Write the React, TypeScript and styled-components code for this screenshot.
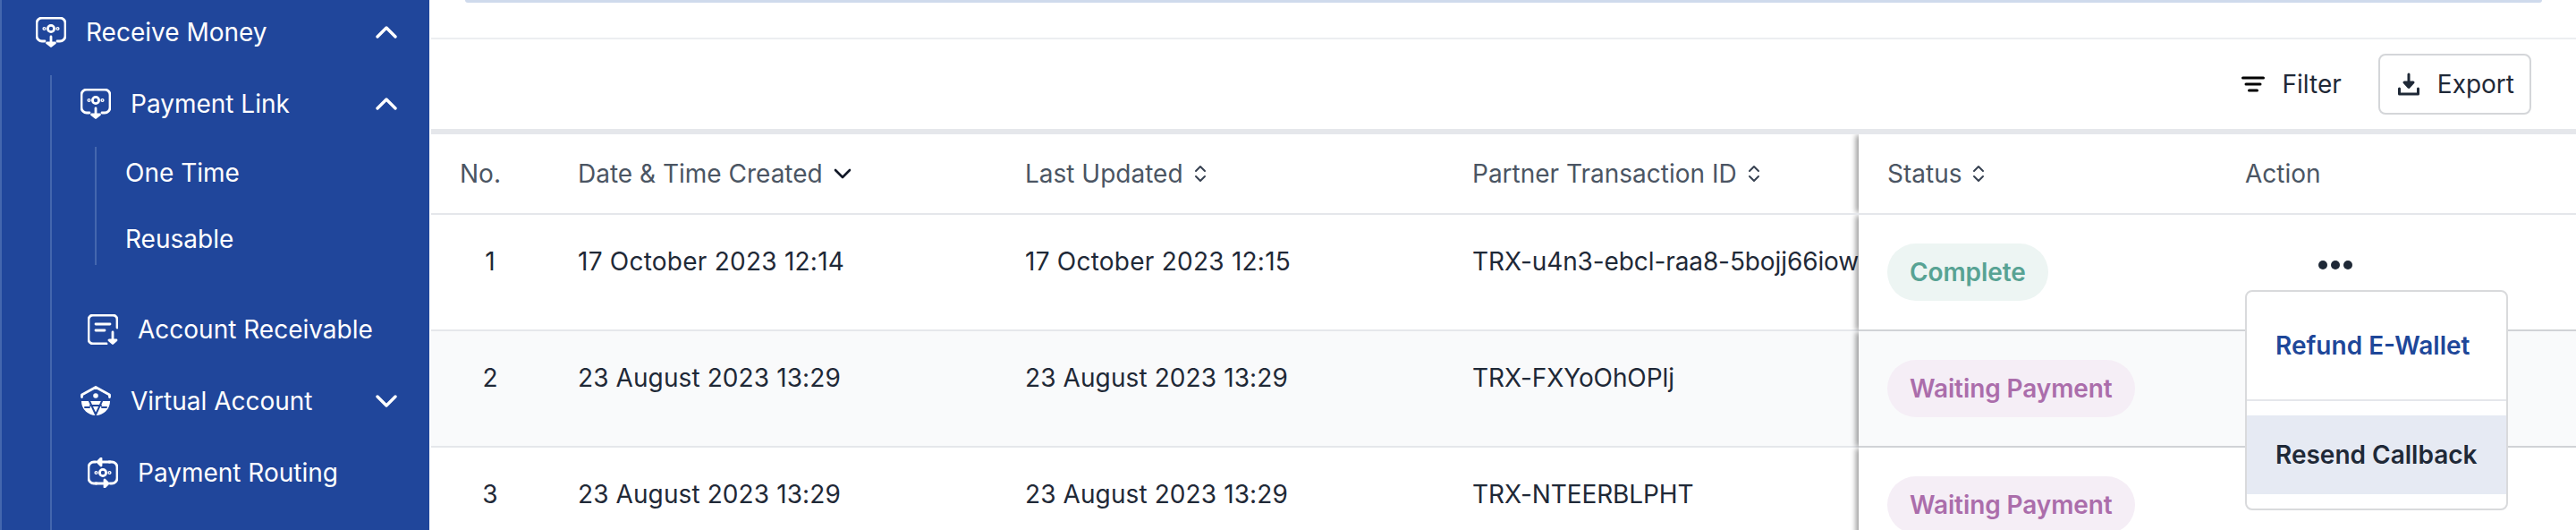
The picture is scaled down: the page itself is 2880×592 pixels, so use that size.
import styled, { createGlobalStyle } from 'styled-components';

const GlobalStyle = createGlobalStyle`
    html, body {
        margin: 0;
        padding: 0;
        background: #ffffff;
        overflow: hidden;
    }
    body {
        font-family: Inter, "Liberation Sans", sans-serif;
        font-size: 28px;
    }
`;

const Page = styled.div`
    display: flex;
    width: 2880px;
    height: 592px;
    overflow: hidden;
`;

const Sidebar = styled.nav`
    width: 480px;
    flex: none;
    box-sizing: border-box;
    padding-left: 38px;
    background: #20469b;
    border-left: 2px solid #4467ae;
    color: #ffffff;
    overflow: hidden;
`;

const MenuItem = styled.div<{ $height: number; $inset?: number }>`
    display: flex;
    align-items: center;
    gap: 22px;
    height: ${(p) => p.$height}px;
    padding-left: ${(p) => p.$inset ?? 0}px;
    font-size: 28px;
    line-height: 40px;
`;

const RootItem = styled(MenuItem)`
    margin-top: -4px;
`;

const MenuLabel = styled.span`
    flex: 1;
`;

const Caret = styled.svg`
    width: 24px;
    height: 14px;
    flex: none;
    margin-right: 36px;
    fill: none;
    stroke: #ffffff;
    stroke-width: 3.4;
    stroke-linecap: round;
    stroke-linejoin: round;
`;

const SubMenu = styled.div`
    display: flex;
    flex-direction: column;
    gap: 16px;
    margin: 8px 0 0 16px;
    padding-left: 32px;
    min-height: 520px;
    border-left: 2px solid #4467ae;
`;

const LinkMenu = styled.div`
    display: flex;
    flex-direction: column;
    gap: 16px;
    margin: 0 0 24px 16px;
    padding-left: 32px;
    border-left: 2px solid #4467ae;
`;

const SubLink = styled.div`
    display: flex;
    align-items: center;
    height: 58px;
    font-size: 28px;
`;

const NavIcon = styled.svg`
    width: 34px;
    height: 34px;
    flex: none;
    fill: none;
    stroke: #ffffff;
    stroke-width: 2.8;
    stroke-linecap: round;
    stroke-linejoin: round;
`;

const Main = styled.main`
    flex: 1;
    min-width: 0;
    padding-left: 2px;
`;

const TopBand = styled.div`
    height: 42px;
    border-bottom: 2px solid #eceef1;
`;

const TopCardEdge = styled.div`
    height: 3px;
    margin: 0 38px;
    border-radius: 0 0 8px 8px;
    background: #cfdaec;
`;

const Toolbar = styled.div`
    display: flex;
    align-items: center;
    justify-content: flex-end;
    gap: 41px;
    height: 100px;
    padding-right: 50px;
    border-bottom: 6px solid #e5e7eb;
    color: #1f2937;
`;

const FilterButton = styled.div`
    display: flex;
    align-items: center;
    gap: 20px;
`;

const ExportButton = styled.div`
    display: flex;
    align-items: center;
    gap: 20px;
    box-sizing: border-box;
    height: 68px;
    padding: 0 17px 0 20px;
    border: 2px solid #d4d6d9;
    border-radius: 8px;
`;

const FilterGlyph = styled.svg`
    width: 26px;
    height: 26px;
    flex: none;
`;

const ExportGlyph = styled.svg`
    width: 24px;
    height: 26px;
    flex: none;
`;

const Row = styled.div<{ $striped?: boolean }>`
    display: grid;
    grid-template-columns: 132px 500px 500px 464px 401px 401px;
    background: ${(p) => (p.$striped ? '#f9fafb' : '#ffffff')};
    border-bottom: 2px solid #e5e7eb;
`;

const HeadCell = styled.div`
    display: flex;
    align-items: center;
    gap: 12px;
    height: 88px;
    padding-left: 32px;
    color: #4b5563;
    white-space: nowrap;
`;

const StatusHeadCell = styled(HeadCell)`
    position: relative;
    box-shadow: -4px 0 6px -1px rgba(0, 0, 0, 0.4);
    clip-path: inset(0 0 0 -12px);
    background: #ffffff;
`;

const ActionHeadCell = styled(HeadCell)`
    padding-left: 31px;
`;

const Cell = styled.div<{ $tracking?: number }>`
    height: 128px;
    box-sizing: border-box;
    padding: 32px 0 0 32px;
    line-height: 40px;
    color: #1f2937;
    white-space: nowrap;
    letter-spacing: ${(p) => p.$tracking ?? 0}px;
`;

const NumberCell = styled(Cell)`
    padding-left: 0;
    text-align: center;
`;

const StatusCell = styled(Cell)`
    position: relative;
    height: 130px;
    margin-bottom: -2px;
    background: inherit;
    border-bottom: 2px solid #d1d3d6;
    box-shadow: -4px 0 6px -1px rgba(0, 0, 0, 0.4);
    clip-path: inset(0 0 0 -12px);
`;

const ActionCell = styled.div`
    position: relative;
    height: 130px;
    margin-bottom: -2px;
    box-sizing: border-box;
    border-bottom: 2px solid #d1d3d6;
`;

const Badge = styled.span<{ $tone: 'complete' | 'waiting' }>`
    display: inline-flex;
    align-items: center;
    height: 64px;
    padding: 0 25px;
    border-radius: 32px;
    font-size: 28px;
    font-weight: 600;
    letter-spacing: -0.1px;
    background: ${(p) => (p.$tone === 'complete' ? '#edf5f3' : '#f5eef6')};
    color: ${(p) => (p.$tone === 'complete' ? '#58a394' : '#ab6dab')};
`;

const Dots = styled.svg`
    display: block;
    width: 40px;
    height: 12px;
    margin: 50px 0 0 112px;
    fill: #1f2937;
`;

const Dropdown = styled.div`
    position: absolute;
    z-index: 2;
    top: 84px;
    left: 31px;
    box-sizing: border-box;
    width: 294px;
    height: 246px;
    background: #ffffff;
    border: 2px solid #d9dadc;
    border-radius: 8px;
    font-weight: 600;
`;

const RefundOption = styled.div`
    display: flex;
    align-items: center;
    height: 120px;
    padding-left: 32px;
    border-bottom: 2px solid #e5e7eb;
    color: #1e4799;
`;

const CallbackOption = styled.div`
    display: flex;
    align-items: center;
    height: 88px;
    margin-top: 16px;
    padding-left: 32px;
    background: #e6eaf3;
    color: #1f2937;
`;

function ReceiveIcon() {
    return (
        <NavIcon viewBox="0 0 34 34">
            <path d="M10 27H7a6 6 0 0 1-6-6V7a6 6 0 0 1 6-6h20a6 6 0 0 1 6 6v14a6 6 0 0 1-6 6h-3" />
            <circle cx="17" cy="13" r="3.6" />
            <circle cx="9.500" cy="13" r="0.7" />
            <circle cx="24.500" cy="13" r="0.7" />
            <path d="M17 22v8" />
            <path d="M12.500 29h9L17 32.500z" fill="#ffffff" />
        </NavIcon>
    );
}

function ReceivableIcon() {
    return (
        <NavIcon viewBox="0 0 34 34">
            <path d="M21 33H6a5 5 0 0 1-5-5V6a5 5 0 0 1 5-5h22a5 5 0 0 1 5 5v9" />
            <path d="M9 11h16M9 18h10" />
            <path d="M28 20v11" />
            <path d="M24 29h8l-4 3.500z" fill="#ffffff" />
        </NavIcon>
    );
}

function VirtualAccountIcon() {
    return (
        <NavIcon viewBox="0 0 34 34">
            <path d="M1.500 12.500V10L17 1.500 32.500 10v2.500" />
            <circle cx="17" cy="11" r="1.400" fill="#ffffff" />
            <path d="M1 17h32a16 16 0 0 1-32 0z" fill="#ffffff" stroke="none" />
            <path d="M10 17l7 15 7-15M5 24h5M24 24h5M11 22h12" stroke="#20469b" strokeWidth="2" />
        </NavIcon>
    );
}

function RoutingIcon() {
    return (
        <NavIcon viewBox="0 0 34 34">
            <path d="M9 5H7a6 6 0 0 0-6 6v12a6 6 0 0 0 6 6h3" />
            <path d="M25 29h2a6 6 0 0 0 6-6V11a6 6 0 0 0-6-6h-3" />
            <path d="M25 5H14" />
            <path d="M15 1v8l-4-4z" fill="#ffffff" />
            <path d="M9 29h11" />
            <path d="M19 25v8l4-4z" fill="#ffffff" />
            <circle cx="17" cy="17" r="3.600" />
            <circle cx="9.500" cy="17" r="0.7" />
            <circle cx="24.500" cy="17" r="0.7" />
        </NavIcon>
    );
}

function CaretUp() {
    return (
        <Caret viewBox="0 0 24 14">
            <path d="M2 12l10-10 10 10" />
        </Caret>
    );
}

function CaretDown() {
    return (
        <Caret viewBox="0 0 24 14">
            <path d="M2 2l10 10 10-10" />
        </Caret>
    );
}

function SortIcon() {
    return (
        <svg width="14" height="20" viewBox="0 0 14 20" fill="none" stroke="#374151" strokeWidth="2" strokeLinecap="round" strokeLinejoin="round">
            <path d="M2 7l5-5 5 5M2 13l5 5 5-5" />
        </svg>
    );
}

function SortedIcon() {
    return (
        <svg width="20" height="12" viewBox="0 0 20 12" fill="none" stroke="#111827" strokeWidth="2.6" strokeLinecap="round" strokeLinejoin="round">
            <path d="M2 2l8 8 8-8" />
        </svg>
    );
}

// the 1s in the reference dates run wider, so the first row needs more tracking
const rows = [
    { id: '1', created: '17 October 2023 12:14', updated: '17 October 2023 12:15', tracking: 0.24, partner: 'TRX-u4n3-ebcl-raa8-5bojj66iow', tone: 'complete' as const, status: 'Complete' },
    { id: '2', created: '23 August 2023 13:29', updated: '23 August 2023 13:29', tracking: 0.1, partner: 'TRX-FXYoOhOPlj', tone: 'waiting' as const, status: 'Waiting Payment' },
    { id: '3', created: '23 August 2023 13:29', updated: '23 August 2023 13:29', tracking: 0.1, partner: 'TRX-NTEERBLPHT', tone: 'waiting' as const, status: 'Waiting Payment' },
];

export default function App() {
    return (
        <Page>
            <GlobalStyle />
            <Sidebar>
                <RootItem $height={80}>
                    <ReceiveIcon />
                    <MenuLabel>Receive Money</MenuLabel>
                    <CaretUp />
                </RootItem>
                <SubMenu>
                    <MenuItem $height={64}>
                        <ReceiveIcon />
                        <MenuLabel>Payment Link</MenuLabel>
                        <CaretUp />
                    </MenuItem>
                    <LinkMenu>
                        <SubLink>One Time</SubLink>
                        <SubLink>Reusable</SubLink>
                    </LinkMenu>
                    <MenuItem $height={64} $inset={8}>
                        <ReceivableIcon />
                        <MenuLabel>Account Receivable</MenuLabel>
                    </MenuItem>
                    <MenuItem $height={64}>
                        <VirtualAccountIcon />
                        <MenuLabel>Virtual Account</MenuLabel>
                        <CaretDown />
                    </MenuItem>
                    <MenuItem $height={64} $inset={8}>
                        <RoutingIcon />
                        <MenuLabel>Payment Routing</MenuLabel>
                    </MenuItem>
                </SubMenu>
            </Sidebar>
            <Main>
                <TopBand>
                    <TopCardEdge />
                </TopBand>
                <Toolbar>
                    <FilterButton>
                        <FilterGlyph viewBox="0 0 26 26" fill="none" stroke="#000000" strokeWidth="3" strokeLinecap="round">
                            <path d="M1.500 6h23M5 13h16M8.500 20h9" />
                        </FilterGlyph>
                        Filter
                    </FilterButton>
                    <ExportButton>
                        <ExportGlyph viewBox="0 0 24 26" fill="none" stroke="#1f2937" strokeWidth="3" strokeLinecap="round" strokeLinejoin="round">
                            <path d="M12 2v13" />
                            <path d="M7 11h10l-5 5.500z" fill="#1f2937" />
                            <path d="M1.500 18v6h21v-6" />
                        </ExportGlyph>
                        Export
                    </ExportButton>
                </Toolbar>
                <Row>
                    <HeadCell>No.</HeadCell>
                    <HeadCell>Date &amp; Time Created <SortedIcon /></HeadCell>
                    <HeadCell>Last Updated <SortIcon /></HeadCell>
                    <HeadCell>Partner Transaction ID <SortIcon /></HeadCell>
                    <StatusHeadCell>Status <SortIcon /></StatusHeadCell>
                    <ActionHeadCell>Action</ActionHeadCell>
                </Row>
                {rows.map((row, index) => (
                    <Row key={row.id} $striped={index === 1}>
                        <NumberCell>{row.id}</NumberCell>
                        <Cell $tracking={row.tracking}>{row.created}</Cell>
                        <Cell $tracking={row.tracking}>{row.updated}</Cell>
                        <Cell $tracking={-0.1}>{row.partner}</Cell>
                        <StatusCell>
                            <Badge $tone={row.tone}>{row.status}</Badge>
                        </StatusCell>
                        <ActionCell>
                            {index === 0 && (
                                <>
                                    <Dots viewBox="0 0 40 12">
                                        <circle cx="6" cy="6" r="5" />
                                        <circle cx="20" cy="6" r="5" />
                                        <circle cx="34" cy="6" r="5" />
                                    </Dots>
                                    <Dropdown>
                                        <RefundOption>Refund E-Wallet</RefundOption>
                                        <CallbackOption>Resend Callback</CallbackOption>
                                    </Dropdown>
                                </>
                            )}
                        </ActionCell>
                    </Row>
                ))}
            </Main>
        </Page>
    );
}
